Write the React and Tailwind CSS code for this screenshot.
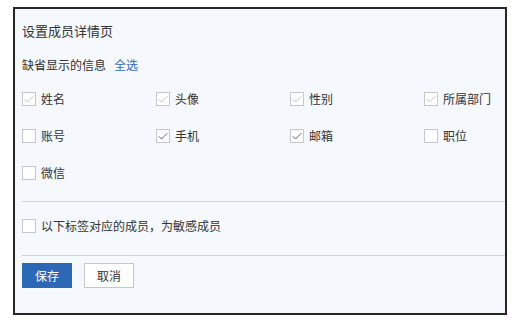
import { Check } from 'lucide-react';

const FIELDS = [
  { label: '姓名', checked: true, locked: true },
  { label: '头像', checked: true, locked: true },
  { label: '性别', checked: true, locked: true },
  { label: '所属部门', checked: true, locked: true },
  { label: '账号', checked: false },
  { label: '手机', checked: true },
  { label: '邮箱', checked: true },
  { label: '职位', checked: false },
  { label: '微信', checked: false },
];

function Box({ checked, locked }) {
  return (
    <span className="w-[14px] h-[14px] border border-[#c4c8cd] bg-white flex items-center justify-center shrink-0">
      {checked && (
        <Check size={13} strokeWidth={1.5} className={locked ? 'text-[#a9adb2]' : 'text-[#333]'} />
      )}
    </span>
  );
}

export default function App() {
  return (
    <div className="w-[515px] h-[323px] bg-white pl-[13px] pt-[7px]" style={{ fontFamily: '"Noto Sans CJK SC", "Noto Sans", sans-serif' }}>
      <div className="w-[494px] h-[308px] border-2 border-[#262626] bg-[#f5f8fc] pl-[7px] text-[#333]">
        <div className="mt-[12px] h-[20px] leading-[20px] text-[13px]">设置成员详情页</div>

        <div className="mt-[14px] h-[20px] flex items-center gap-[8px] text-[12px]">
          <span>缺省显示的信息</span>
          <span className="text-[#2e6dbd] cursor-pointer">全选</span>
        </div>

        <div className="mt-[14px] grid grid-cols-[134px_134px_134px_1fr] gap-y-[17px]">
          {FIELDS.map(f => (
            <label key={f.label} className="h-[20px] flex items-center gap-[5px] text-[12px]">
              <Box checked={f.checked} locked={f.locked} />
              <span>{f.label}</span>
            </label>
          ))}
        </div>

        <div className="mt-[18px] h-px bg-[#cdd1d6]" />

        <label className="mt-[14px] h-[20px] flex items-center gap-[5px] text-[12px]">
          <Box checked={false} />
          <span>以下标签对应的成员，为敏感成员</span>
        </label>

        <div className="mt-[19px] h-px bg-[#cdd1d6]" />

        <div className="mt-[7px] flex gap-[12px] text-[12px]">
          <button className="w-[50px] h-[25px] bg-[#2b68b6] text-white">保存</button>
          <button className="w-[50px] h-[25px] bg-white border border-[#c4c8cd] text-[#333]">取消</button>
        </div>
      </div>
    </div>
  );
}
